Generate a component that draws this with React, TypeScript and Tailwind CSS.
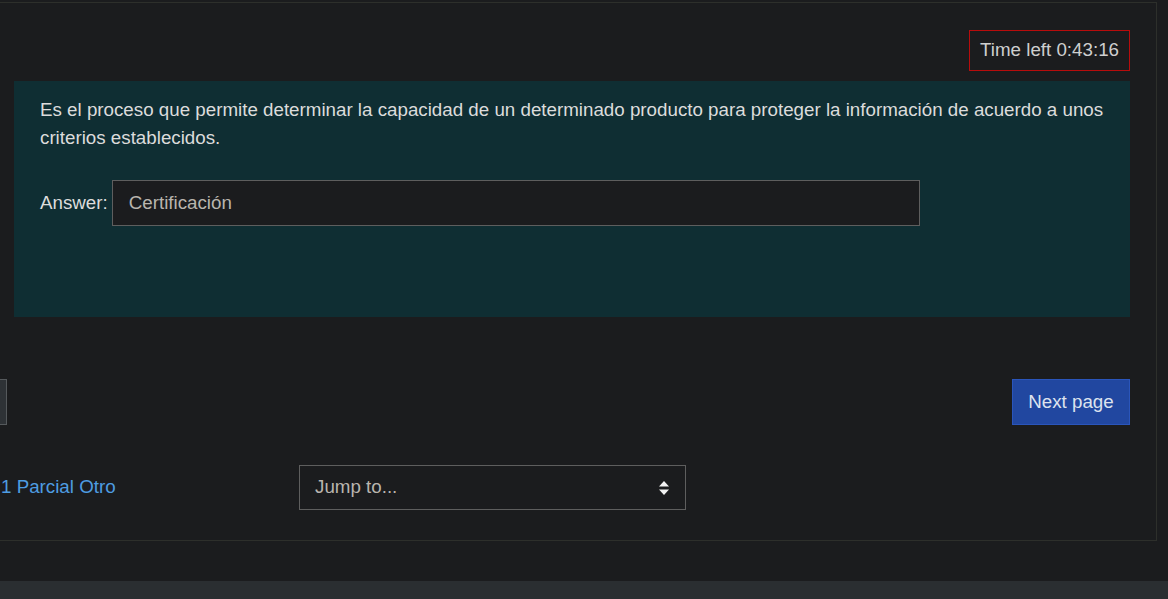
import React from "react";

export default function App() {
  return (
    <div
      className="w-[1168px] h-[599px] overflow-hidden bg-[#1b1c1e] flex flex-col"
      style={{ fontFamily: '"Liberation Sans", Arial, sans-serif' }}
    >
      <div className="mt-[2px] ml-[-20px] mr-[11px] h-[539px] border border-[#2d2f2b] flex flex-col pl-[32px] pr-[26px] pt-[27px]">
        <div className="flex justify-end">
          <div className="h-[41px] px-[10px] border border-[#b80c0c] flex items-center text-[18.75px] text-[#cfcfcf]">
            Time left 0:43:16
          </div>
        </div>
        <div className="mt-[10px] ml-[1px] h-[236px] bg-[#0f2e33] pl-[26px] pr-[20px] pt-[15px]">
          <p className="text-[18.75px] leading-[28px] text-[#dcdcdc]">
            Es el proceso que permite determinar la capacidad de un determinado producto para proteger la información de acuerdo a unos criterios establecidos.
          </p>
          <div className="mt-[28px] flex items-center gap-[4px] text-[18.75px] text-[#dcdcdc]">
            <span>Answer:</span>
            <div className="w-[808px] h-[46px] border border-[#5e5e5e] bg-[#1b1c1e] flex items-center pl-[16px] text-[#b9b5ae]">
              Certificación
            </div>
          </div>
        </div>
        <div className="mt-[62px] flex justify-between items-center">
          <div className="ml-[-53px] w-[47px] h-[46px] bg-[#2e3236] border border-[#55595c]" />
          <div className="w-[118px] h-[46px] bg-[#2147a0] border border-[#2a55bb] flex items-center justify-center text-[18.75px] text-[#dde3ee]">
            Next page
          </div>
        </div>
        <div className="mt-[40px] flex items-center">
          <a className="ml-[-12px] w-[298px] text-[18.75px] text-[#4e9de2]">1 Parcial Otro</a>
          <div className="w-[387px] h-[45px] border border-[#5e5e5e] flex items-center justify-between pl-[15px] pr-[15px] text-[18.75px] text-[#b9b5ae]">
            <span>Jump to...</span>
            <svg width="12" height="14" viewBox="0 0 12 14">
              <path d="M6 0 L11 5.5 L1 5.5 Z" fill="#f2f2f2" />
              <path d="M6 14 L11 8.5 L1 8.5 Z" fill="#f2f2f2" />
            </svg>
          </div>
        </div>
      </div>
      <div className="flex-1" />
      <div className="h-[18px] bg-[#2a2e31]" />
    </div>
  );
}
